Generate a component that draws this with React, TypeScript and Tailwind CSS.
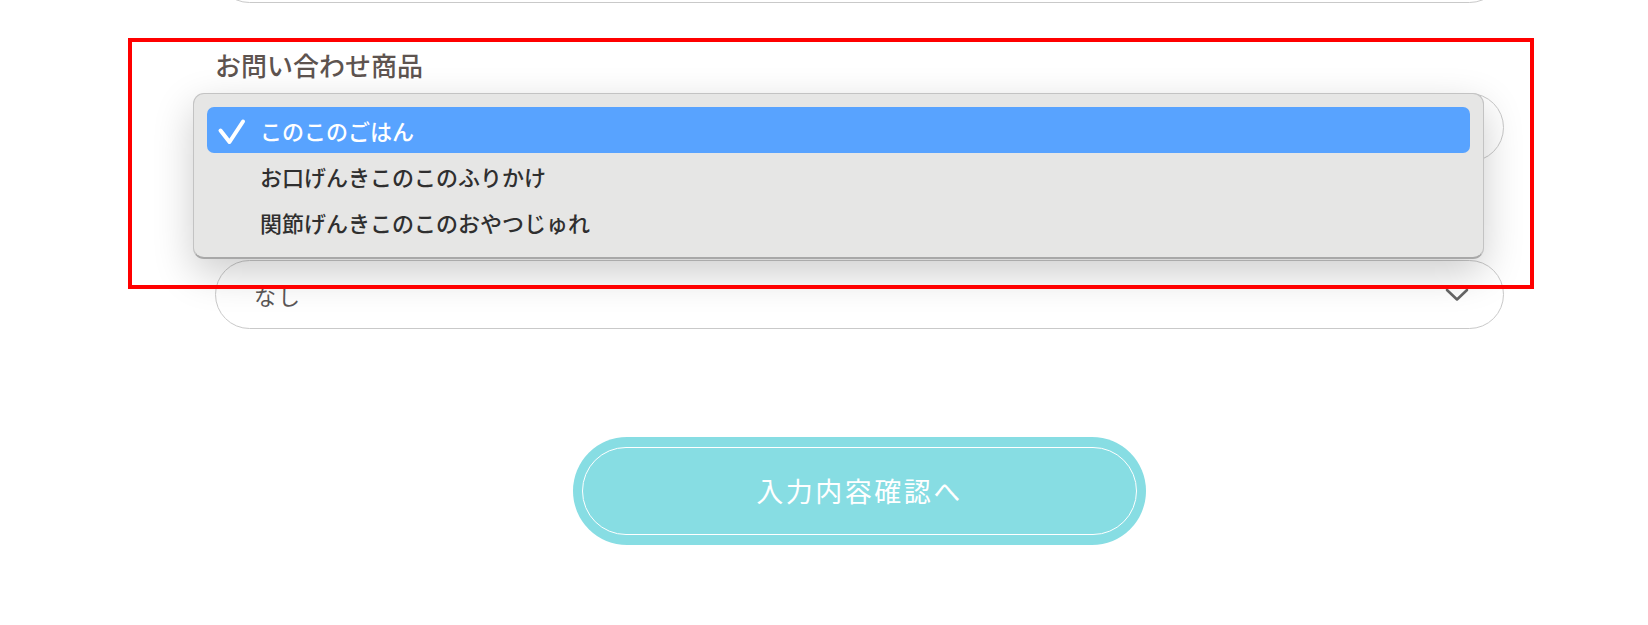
import React from "react";

const jp = { fontFamily: '"Noto Sans CJK JP", "Noto Sans", sans-serif' };

const options = ["このこのごはん", "お口げんきこのこのふりかけ", "関節げんきこのこのおやつじゅれ"];

const Chevron = () => (
  <svg width="24" height="14" viewBox="0 0 24 14" fill="none">
    <path d="M2 2 L12 11.5 L22 2" stroke="#666" strokeWidth="2.6" strokeLinecap="round" strokeLinejoin="round" />
  </svg>
);

const Check = () => (
  <svg width="30" height="32" viewBox="0 0 30 32" fill="none">
    <path d="M3.5 16.5 L12.5 28 L26 7.5" stroke="#fff" strokeWidth="4" strokeLinecap="round" strokeLinejoin="round" />
  </svg>
);

const SelectBox = ({ value, className = "" }: { value: string; className?: string }) => (
  <div
    className={`flex h-[69px] items-center justify-between rounded-full border border-[#c9c9c9] bg-white pl-[38px] pr-[34px] ${className}`}
  >
    <span className="pt-[2px] text-[22px] tracking-[2px] text-[#5a5757]">{value}</span>
    <Chevron />
  </div>
);

export default function App() {
  return (
    <div className="relative h-[625px] w-full overflow-hidden bg-white" style={jp}>
      <div className="ml-[215px] flex w-[1289px] flex-col">
        {/* previous field, scrolled mostly out of view */}
        <SelectBox value="" className="-mt-[66px]" />

        <label className="mt-[46px] text-[26px] leading-[32px] font-medium text-[#5e5450]">
          お問い合わせ商品
        </label>
        {/* current value is hidden behind the open menu */}
        <SelectBox value="" className="mt-[12px]" />

        <SelectBox value="なし" className="mt-[98px]" />

        <div className="ml-[358px] mt-[108px] flex h-[108px] w-[573px] rounded-full bg-[#87dde3] px-[9px] py-[10px]">
          <button className="flex flex-1 items-center justify-center rounded-full border border-white text-[27px] tracking-[2.5px] text-white">
            入力内容確認へ
          </button>
        </div>
      </div>

      {/* open native dropdown */}
      <div className="absolute left-[193px] top-[93px] w-[1291px] rounded-[11px] border border-[#c3c3c3] border-b-[2px] border-b-[#a8a8a8] bg-[#e6e6e5] px-[13px] pt-[13px] pb-[12px] shadow-[0_14px_40px_rgba(0,0,0,0.2)]">
        {options.map((o, i) => (
          <div
            key={o}
            className={`flex h-[46px] items-center rounded-[7px] ${i === 0 ? "bg-[#58a3ff] text-white" : "text-[#2f2f2f]"}`}
          >
            <span className="flex w-[53px] items-center pl-[10px]">{i === 0 && <Check />}</span>
            <span className="text-[22px] leading-none font-medium">{o}</span>
          </div>
        ))}
      </div>

      {/* annotation frame */}
      <div className="pointer-events-none absolute left-[128px] top-[38px] h-[251px] w-[1406px] border-[4px] border-[#ff0000]" />
    </div>
  );
}
